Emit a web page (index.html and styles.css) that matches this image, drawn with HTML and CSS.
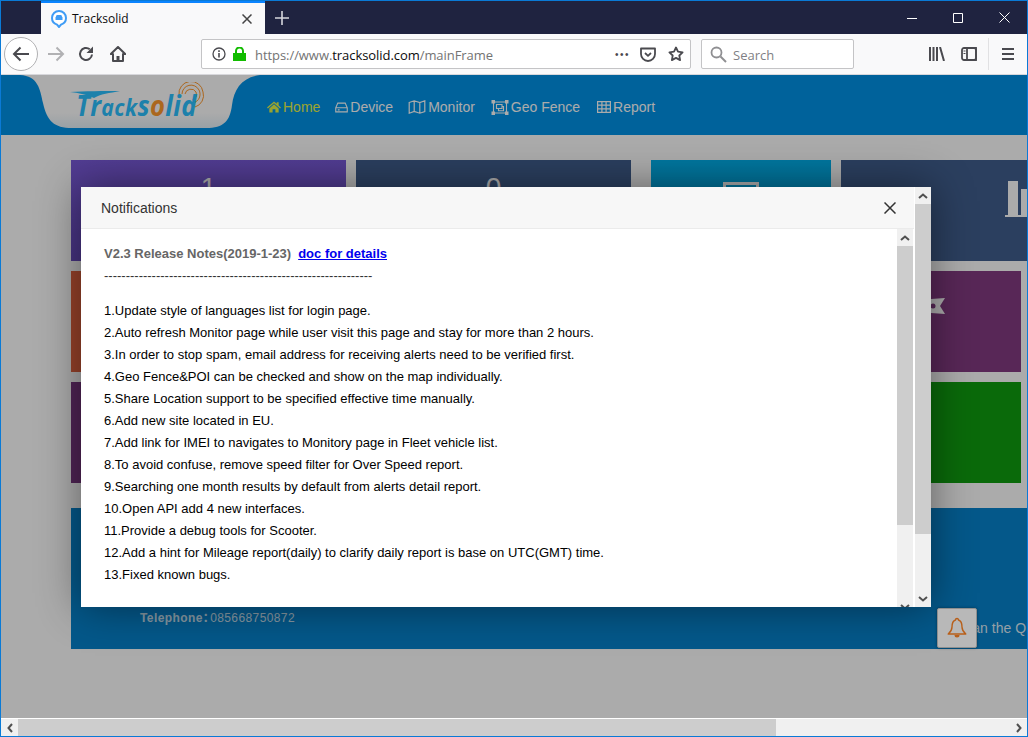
FILE: index.html
```html
<!DOCTYPE html>
<html>
<head>
    <title>Tracksolid</title>
    <link rel="stylesheet" href="styles.css">
</head>
<body>
<div class="window">
    <div class="titlebar">
        <div class="tab">
            <svg class="tab-icon" width="16" height="18" viewBox="0 0 16 18"><path d="M8 1a7 7 0 0 0-7 7c0 3.600 2.600 5.800 5 6.600L8 17l2-2.400c2.400-.8 5-3 5-6.600a7 7 0 0 0-7-7z" fill="#fff" stroke="#3f9cf5" stroke-width="2"/><path d="M4.500 10V7.500L5.700 5h4.600l1.200 2.500V10z" fill="#3f9cf5"/></svg>
            <span class="tab-title">Tracksolid</span>
            <svg class="tab-close" width="10" height="10" viewBox="0 0 10 10"><path d="M.5.500l9 9M9.500.500l-9 9" stroke="#444" stroke-width="1.500" fill="none"/></svg>
        </div>
        <svg class="new-tab" width="14" height="14" viewBox="0 0 14 14"><path d="M7 0v14M0 7h14" stroke="#d5d6dc" stroke-width="1.600" fill="none"/></svg>
        <div class="win-controls">
            <svg width="10" height="10" viewBox="0 0 10 10"><path d="M0 5.500h10" stroke="#fff"/></svg>
            <svg width="10" height="10" viewBox="0 0 10 10"><path d="M.5.500h9v9h-9z" stroke="#fff" fill="none"/></svg>
            <svg width="11" height="11" viewBox="0 0 11 11"><path d="M.5.500l10 10M10.500.500l-10 10" stroke="#fff" fill="none"/></svg>
        </div>
    </div>

    <div class="toolbar">
        <div class="back-btn">
            <svg width="18" height="16" viewBox="0 0 18 16"><path d="M17 8H2M8.500 1.500L2 8l6.500 6.500" stroke="#4a4a4f" stroke-width="2" fill="none"/></svg>
        </div>
        <svg class="tool-forward" width="18" height="16" viewBox="0 0 18 16"><path d="M1 8h15M9.500 1.500L16 8l-6.500 6.500" stroke="#b1b1b3" stroke-width="2" fill="none"/></svg>
        <svg class="tool-reload" width="16" height="16" viewBox="0 0 16 16"><path d="M14 8.500A6 6 0 1 1 11.800 3.300" stroke="#4a4a4f" stroke-width="2" fill="none"/><path d="M15 .5v6.500H8.500z" fill="#4a4a4f"/></svg>
        <svg class="tool-home" width="16" height="16" viewBox="0 0 16 16"><path d="M8 1L.8 8h2.200v7h10V8h2.200z" fill="none" stroke="#4a4a4f" stroke-width="2" stroke-linejoin="round"/><path d="M6.500 10h3v5h-3z" fill="#4a4a4f"/></svg>

        <div class="urlbar">
            <svg class="url-info" width="14" height="14" viewBox="0 0 14 14"><circle cx="7" cy="7" r="6" fill="none" stroke="#4a4a4f" stroke-width="1.300"/><path d="M6.200 6h1.600v4.500H6.200zM6.200 3.300h1.600v1.600H6.200z" fill="#4a4a4f"/></svg>
            <svg class="url-lock" width="13" height="14" viewBox="0 0 13 14"><path d="M0 6h13v8H0z" fill="#12bc00"/><path d="M3 6.500V4a3.500 3.500 0 0 1 7 0v2.500" stroke="#12bc00" stroke-width="2" fill="none"/></svg>
            <span class="url-text">https://www.<b>tracksolid.com</b>/mainFrame</span>
            <span class="url-dots">•••</span>
            <svg class="url-pocket" width="16" height="15" viewBox="0 0 16 15"><path d="M1 1.500h14v5.500a7 7 0 0 1-14 0z" fill="none" stroke="#4a4a4f" stroke-width="1.800" stroke-linejoin="round"/><path d="M5 6l3 2.800L11 6" fill="none" stroke="#4a4a4f" stroke-width="1.800"/></svg>
            <svg class="url-star" width="16" height="16" viewBox="0 0 16 16"><path d="M8 1.500l2 4.200 4.600.6-3.300 3.200.8 4.600L8 11.900l-4.100 2.200.8-4.600L1.400 6.300 6 5.700z" fill="none" stroke="#4a4a4f" stroke-width="1.800" stroke-linejoin="round"/></svg>
        </div>
        <div class="searchbar">
            <svg width="17" height="17" viewBox="0 0 17 17"><circle cx="6.500" cy="6.500" r="5" fill="none" stroke="#8f8f92" stroke-width="1.800"/><path d="M10.500 10.500l5.500 5.500" stroke="#8f8f92" stroke-width="2"/></svg>
            <span>Search</span>
        </div>
        <svg class="tool-library" width="16" height="14" viewBox="0 0 16 14"><path d="M1 0v14M4.500 0v14M8 0v14M11 0l4 14" stroke="#4a4a4f" stroke-width="2" fill="none"/></svg>
        <svg class="tool-sidebar" width="16" height="14" viewBox="0 0 16 14"><rect x="1" y="1" width="14" height="12" rx="2" fill="none" stroke="#4a4a4f" stroke-width="1.800"/><path d="M6 1h9v12H6z" fill="none" stroke="#4a4a4f" stroke-width="1.800"/><path d="M2.500 4h2M2.500 6.500h2" stroke="#4a4a4f"/></svg>
        <div class="tool-sep"></div>
        <svg class="tool-menu" width="12" height="12" viewBox="0 0 12 12"><path d="M0 1h12M0 6h12M0 11h12" stroke="#4a4a4f" stroke-width="1.800"/></svg>
    </div>

    <div class="page">
        <div class="nav">
            <div class="notch">
                <svg width="240" height="56" viewBox="0 0 240 56"><defs><linearGradient id="notchFill" x1="0" y1="0" x2="0" y2="1"><stop offset=".72" stop-color="#ffffff"/><stop offset="1" stop-color="#e4f0f8"/></linearGradient></defs><path d="M0 0C18 1 20 14 23 28 27 46 34 53 52 53H186C204 53 210 46 212 30 214 14 222 2 240 0Z" fill="url(#notchFill)"/></svg>
                <div class="logo">
                    <svg class="logo-swoosh" width="50" height="8" viewBox="0 0 50 8"><path d="M0 1C14 0 34 0 50 0 40 2 30 3 24 7 16 3 8 2 0 1z" fill="#2cc0ff"/></svg>
                    <svg class="logo-rings" width="28" height="28" viewBox="0 0 28 28"><g fill="none" stroke="#ff9a2e" stroke-width="1"><path d="M4 12A9 9 0 0 1 21 8 9 9 0 0 1 15 21"/><path d="M1 13A12 12 0 0 1 25 10 12 12 0 0 1 17 25"/><path d="M7 12A6 6 0 0 1 18 10 6 6 0 0 1 14 18"/></g></svg>
                    <span class="logo-text">Tr<span class="logo-narrow">ack</span>s<span class="logo-o">o</span>lid</span>
                </div>
            </div>
            <ul class="menu">
                <li class="active"><svg width="14" height="12" viewBox="0 0 15 12"><path d="M7.500 0L0 6.500l1 1L7.500 2 14 7.500l1-1-2.500-2.200V.8h-2v1.800z" fill="currentColor"/><path d="M2.500 7.500L7.500 3l5 4.500V12H9V8.500H6V12H2.500z" fill="currentColor"/></svg><a href="#">Home</a></li>
                <li><svg width="13" height="11" viewBox="0 0 14 11"><path d="M3 .8h8l2.200 5v4.400H.8V5.800zM1 5.800h12M3 8h2" fill="none" stroke="currentColor" stroke-width="1.200"/></svg><a href="#">Device</a></li>
                <li><svg width="18" height="14" viewBox="0 0 17 14"><path d="M.7 2.500L5.700.8l5.600 1.700L16.300.8v10.700l-5 1.700-5.600-1.700-5 1.700zM5.700.8v10.700M11.300 2.500v10.700" fill="none" stroke="currentColor" stroke-width="1.200"/></svg><a href="#">Monitor</a></li>
                <li><svg width="18" height="15" viewBox="0 0 17 15"><path d="M2 2h13v11H2zM5 4.500h5.500v4H5zM7 8.500v2.200h5V6.500h-1.500" fill="none" stroke="currentColor" stroke-width="1.100"/><path d="M0 0h3.500v3.500H0zM13.500 0H17v3.500h-3.500zM0 11.500h3.500V15H0zM13.500 11.500H17V15h-3.500z" fill="currentColor"/></svg><a href="#">Geo Fence</a></li>
                <li><svg width="14" height="12" viewBox="0 0 14 12"><path d="M.6.600h12.800v10.800H.6zM.6 4.200h12.800M.6 7.800h12.800M4.900.600v10.800M9.100.600v10.800" fill="none" stroke="currentColor" stroke-width="1.200"/></svg><a href="#">Report</a></li>
            </ul>
        </div>

        <div class="content">
            <div class="tiles">
                <div class="tile tile-purple"><span class="tile-num">1</span></div>
                <div class="tile tile-navy"><span class="tile-num">0</span></div>
                <div class="tile tile-teal"><div class="tile-screen"></div></div>
                <div class="tile tile-navy tile-wide">
                    <div class="tile-bars"><i class="bar-high"></i><i class="bar-low"></i></div>
                </div>
                <div class="tile tile-orange tile-span"></div>
                <div class="tile tile-magenta">
                    <svg class="tile-ribbon" width="28" height="16" viewBox="0 0 28 16"><path d="M0 2L28 0l-5 8 5 8L0 14z" fill="#fff"/><circle cx="16" cy="8" r="2.500" fill="#833b82"/></svg>
                </div>
                <div class="tile tile-plum tile-span"></div>
                <div class="tile tile-green"></div>
            </div>
            <div class="contact">
                <div class="phone"><b>Telephone：</b>085668750872</div>
                <div class="scan">Scan the QR code</div>
            </div>
            <div class="bell">
                <svg width="20" height="22" viewBox="0 0 20 22"><path d="M10 1.500c-1 0-1.500.8-1.500 1.500C5.500 4 5 7 5 10c0 3-1.500 5-3.800 7h17.600C16.500 15 15 13 15 10c0-3-.5-6-3.500-7 0-.7-.5-1.500-1.500-1.500z" fill="none" stroke="#b85f1a" stroke-width="1.400" stroke-linejoin="round"/><path d="M7.500 18a2.500 2.500 0 0 0 5 0z" fill="#b85f1a"/></svg>
            </div>
        </div>

        <div class="overlay"></div>

        <div class="modal">
            <div class="modal-main">
                <div class="modal-header">
                    <span>Notifications</span>
                    <svg width="12" height="12" viewBox="0 0 12 12"><path d="M.5.500l11 11M11.500.500l-11 11" stroke="#333" stroke-width="1.500" fill="none"/></svg>
                </div>
                <div class="modal-body">
                    <div class="notes">
                        <div class="notes-title"><b>V2.3 Release Notes(2019-1-23)</b><a href="#">doc for details</a></div>
                        <div class="notes-rule">--------------------------------------------------------------</div>
                        <ul class="notes-list">
                            <li>1.Update style of languages list for login page.</li>
                            <li>2.Auto refresh Monitor page while user visit this page and stay for more than 2 hours.</li>
                            <li>3.In order to stop spam, email address for receiving alerts need to be verified first.</li>
                            <li>4.Geo Fence&amp;POI can be checked and show on the map individually.</li>
                            <li>5.Share Location support to be specified effective time manually.</li>
                            <li>6.Add new site located in EU.</li>
                            <li>7.Add link for IMEI to navigates to Monitory page in Fleet vehicle list.</li>
                            <li>8.To avoid confuse, remove speed filter for Over Speed report.</li>
                            <li>9.Searching one month results by default from alerts detail report.</li>
                            <li>10.Open API add 4 new interfaces.</li>
                            <li>11.Provide a debug tools for Scooter.</li>
                            <li>12.Add a hint for Mileage report(daily) to clarify daily report is base on UTC(GMT) time.</li>
                            <li>13.Fixed known bugs.</li>
                        </ul>
                    </div>
                    <div class="scrollbar scrollbar-inner">
                        <div class="sb-btn"><svg width="10" height="6" viewBox="0 0 10 6"><path d="M1 5l4-3.500L9 5" stroke="#505050" stroke-width="2" fill="none"/></svg></div>
                        <div class="sb-thumb inner-thumb"></div>
                        <div class="sb-track"></div>
                        <div class="sb-btn"><svg width="10" height="6" viewBox="0 0 10 6"><path d="M1 1l4 3.500L9 1" stroke="#505050" stroke-width="2" fill="none"/></svg></div>
                    </div>
                </div>
            </div>
            <div class="scrollbar scrollbar-outer">
                <div class="sb-btn"><svg width="10" height="6" viewBox="0 0 10 6"><path d="M1 5l4-3.500L9 5" stroke="#505050" stroke-width="2" fill="none"/></svg></div>
                <div class="sb-thumb outer-thumb"></div>
                <div class="sb-track"></div>
                <div class="sb-btn"><svg width="10" height="6" viewBox="0 0 10 6"><path d="M1 1l4 3.500L9 1" stroke="#505050" stroke-width="2" fill="none"/></svg></div>
            </div>
        </div>
    </div>

    <div class="hscroll">
        <div class="hs-btn"><svg width="6" height="10" viewBox="0 0 6 10"><path d="M5 1L1.500 5 5 9" stroke="#505050" stroke-width="2" fill="none"/></svg></div>
        <div class="hs-thumb"></div>
        <div class="hs-track"></div>
        <div class="hs-btn"><svg width="6" height="10" viewBox="0 0 6 10"><path d="M1 1l3.500 4L1 9" stroke="#505050" stroke-width="2" fill="none"/></svg></div>
    </div>
</div>
</body>
</html>
```

FILE: styles.css
```css
* {
    box-sizing: border-box;
}

html, body {
    margin: 0;
    padding: 0;
    height: 100%;
    overflow: hidden;
}

body {
    font-family: "Liberation Sans", Arial, sans-serif;
}

.window {
    width: 1028px;
    height: 737px;
    display: flex;
    flex-direction: column;
    border: 1px solid #0a7ad6;
    background-color: #fff;
}

/* browser chrome */
.titlebar {
    height: 33px;
    flex: none;
    display: flex;
    align-items: center;
    padding-left: 40px;
    background-color: #1f2340;
}

.tab {
    width: 224px;
    height: 33px;
    display: flex;
    align-items: center;
    padding: 0 13px 0 10px;
    background-color: #f9f9fa;
    border-top: 2px solid #0a84ff;
}

.tab-icon {
    margin-right: 5px;
}

.tab-title {
    flex: 1;
    font-family: "Open Sans", sans-serif;
    font-size: 12px;
    color: #0c0c0d;
}

.new-tab {
    margin-left: 10px;
}

.win-controls {
    margin-left: auto;
    display: flex;
    align-items: center;
    gap: 36px;
    padding-right: 17px;
}

.toolbar {
    height: 41px;
    flex: none;
    display: flex;
    align-items: center;
    background-color: #f9f9fa;
    border-bottom: 1px solid #d7d7db;
}

.back-btn {
    width: 34px;
    height: 34px;
    margin-left: 3px;
    display: flex;
    align-items: center;
    justify-content: center;
    border: 1px solid #b1b1b3;
    border-radius: 50%;
    background-color: #fff;
}

.tool-forward {
    margin-left: 9px;
}

.tool-reload {
    margin-left: 13px;
}

.tool-home {
    margin-left: 16px;
}

.urlbar {
    width: 490px;
    height: 30px;
    margin-left: 75px;
    display: flex;
    align-items: center;
    padding-left: 10px;
    background-color: #fff;
    border: 1px solid #c4c4c6;
    border-radius: 2px;
}

.url-lock {
    margin-left: 7px;
}

.url-text {
    margin-left: 9px;
    padding-top: 2px;
    flex: 1;
    font-family: "Open Sans", sans-serif;
    font-size: 13px;
    letter-spacing: -0.06px;
    color: #737373;
    white-space: nowrap;
}

.url-text b {
    font-weight: normal;
    color: #0c0c0d;
}

.url-dots {
    font-size: 10px;
    letter-spacing: 1.5px;
    color: #4a4a4f;
}

.url-pocket {
    margin-left: 10px;
}

.url-star {
    margin-left: 12px;
    margin-right: 6px;
}

.searchbar {
    width: 153px;
    height: 30px;
    margin-left: 10px;
    display: flex;
    align-items: center;
    gap: 6px;
    padding-left: 8px;
    background-color: #fff;
    border: 1px solid #c4c4c6;
    border-radius: 2px;
    font-family: "Open Sans", sans-serif;
    font-size: 13px;
    color: #7f7f85;
}

.searchbar span {
    padding-top: 2px;
}

.tool-library {
    margin-left: 75px;
}

.tool-sidebar {
    margin-left: 16px;
}

.tool-sep {
    width: 1px;
    height: 32px;
    margin-left: 11px;
    background-color: #e1e1e3;
}

.tool-menu {
    margin-left: 13px;
}

/* page under the dialog */
.page {
    position: relative;
    flex: 1;
    overflow: hidden;
    background-color: #fff;
}

.nav {
    position: relative;
    height: 60px;
    padding: 4px 0 0 266px;
    display: flex;
    align-items: center;
    background-color: #0093e8;
}

.notch {
    position: absolute;
    left: 19px;
    top: 0;
    width: 240px;
    height: 56px;
}

.logo {
    position: absolute;
    left: 50px;
    top: 13px;
    width: 140px;
    height: 34px;
}

.logo-text {
    display: block;
    font-family: "Open Sans", sans-serif;
    font-style: italic;
    font-weight: 700;
    font-size: 29px;
    line-height: 34px;
    letter-spacing: 0.5px;
    color: #2cc0ff;
    transform: scaleX(0.88);
    transform-origin: left center;
    white-space: nowrap;
    padding-left: 7px;
}

.logo-narrow {
    font-size: 24px;
}

.logo-o {
    color: #ff9a2e;
}

.logo-swoosh {
    position: absolute;
    left: 0;
    top: 3px;
}

.logo-rings {
    position: absolute;
    left: 108px;
    top: -6px;
}

.menu {
    list-style-type: none;
    margin: 0;
    padding: 0;
    display: flex;
    color: #fff;
    font-size: 14px;
}

.menu li {
    display: flex;
    align-items: center;
    gap: 2px;
    margin-right: 15px;
}

.menu li:nth-child(3) {
    margin-right: 16px;
}

.menu li:nth-child(4) {
    margin-right: 17px;
}

.menu li a {
    color: inherit;
    text-decoration: none;
}

.menu .active {
    color: #e6f545;
}

.content {
    position: relative;
    padding: 25px 0 0 70px;
}

.tiles {
    display: grid;
    grid-template-columns: 275px 275px 190px 180px;
    grid-auto-rows: 101px;
    gap: 10px;
}

.tile {
    display: flex;
    justify-content: center;
    overflow: hidden;
}

.tile-span {
    grid-column: span 3;
}

.tile-purple {
    background: linear-gradient(#7b5bdb, #6a4cc0);
}

.tile-navy {
    background-color: #405e8e;
}

.tile-teal {
    margin-left: 10px;
    background: linear-gradient(#00b2ee, #0090c4);
}

.tile-wide {
    margin-right: -7px;
    justify-content: flex-end;
}

.tile-orange {
    background-color: #e1633f;
}

.tile-magenta {
    background-color: #833b82;
}

.tile-plum {
    background-color: #78377f;
}

.tile-green {
    background-color: #0f9f0f;
}

.tile-num {
    margin-top: 12px;
    font-size: 28px;
    line-height: 32px;
    color: #fff;
}

.tile-screen {
    width: 36px;
    height: 40px;
    margin-top: 22px;
    border: 3px solid #fff;
}

.tile-bars {
    flex: none;
    height: 36px;
    margin: 21px -3px 0 0;
    padding-left: 3px;
    display: flex;
    align-items: flex-end;
    gap: 3px;
    border-bottom: 2px solid #fff;
}

.tile-bars i {
    display: block;
    width: 10px;
    background-color: #fff;
}

.bar-high {
    height: 34px;
}

.bar-low {
    height: 26px;
}

.tile-ribbon {
    margin-top: 27px;
}

.contact {
    width: 1100px;
    height: 141px;
    margin-top: 25px;
    padding: 0 0 24px 69px;
    display: flex;
    align-items: flex-end;
    background-color: #0683ce;
    color: #fff;
}

.phone {
    width: 816px;
    font-size: 12px;
    letter-spacing: 0.4px;
    color: #ffffffcc;
}

.phone b {
    margin-right: -5px;
    font-family: "Liberation Sans", "Noto Sans CJK SC", sans-serif;
}

.scan {
    margin-bottom: -11px;
    font-size: 14px;
    white-space: nowrap;
    color: #ffffffe0;
}

.bell {
    position: absolute;
    z-index: 2;
    left: 936px;
    top: 473px;
    width: 40px;
    height: 40px;
    display: flex;
    align-items: center;
    justify-content: center;
    background-color: #b8b8b8;
    border: 1px solid #8f8f8f;
    border-radius: 2px;
    box-shadow: 0 0 3px rgba(0, 0, 0, 0.4);
}

/* dialog */
.overlay {
    position: absolute;
    left: 0;
    top: 0;
    right: 0;
    bottom: 0;
    background-color: rgba(0, 0, 0, 0.33);
}

.modal {
    position: absolute;
    left: 80px;
    top: 112px;
    width: 850px;
    height: 420px;
    display: flex;
    background-color: #fff;
    box-shadow: 0 0 40px rgba(0, 0, 0, 0.45);
}

.modal-main {
    width: 833px;
    display: flex;
    flex-direction: column;
    overflow: hidden;
}

.modal-header {
    height: 42px;
    flex: none;
    display: flex;
    align-items: center;
    justify-content: space-between;
    padding: 0 18px 0 20px;
    background-color: #f7f7f7;
    border-bottom: 1px solid #ebebeb;
    font-size: 14px;
    color: #333;
}

.modal-body {
    flex: 1;
    display: flex;
    overflow: hidden;
}

.notes {
    flex: 1;
    padding: 14px 0 0 23px;
    font-size: 12px;
    color: #000;
}

.notes-title {
    line-height: 22px;
    font-size: 13px;
    color: #666;
}

.notes-title a {
    margin-left: 7px;
    font-weight: bold;
    color: #0000ee;
}

.notes-rule {
    line-height: 22px;
    font-size: 13px;
    color: #333;
}

.notes-list {
    list-style-type: none;
    margin: 13px 0 0;
    padding: 0;
    font-size: 13px;
}

.notes-list li {
    line-height: 22px;
}

.scrollbar {
    display: flex;
    flex-direction: column;
    flex: none;
}

.scrollbar-inner {
    width: 16px;
    height: 386px;
    margin-right: 1px;
}

.scrollbar-outer {
    width: 16px;
    margin-left: 1px;
}

.sb-btn {
    height: 17px;
    flex: none;
    display: flex;
    align-items: center;
    justify-content: center;
    background-color: #f0f0f0;
}

.sb-thumb {
    flex: none;
    background-color: #cdcdcd;
}

.inner-thumb {
    height: 279px;
}

.outer-thumb {
    height: 330px;
}

.sb-track {
    flex: 1;
    background-color: #f0f0f0;
}

.hscroll {
    height: 18px;
    flex: none;
    display: flex;
    border-top: 1px solid #fff;
    background-color: #f0f0f0;
}

.hs-btn {
    width: 17px;
    flex: none;
    display: flex;
    align-items: center;
    justify-content: center;
}

.hs-thumb {
    width: 758px;
    background-color: #cdcdcd;
}

.hs-track {
    flex: 1;
}
```
